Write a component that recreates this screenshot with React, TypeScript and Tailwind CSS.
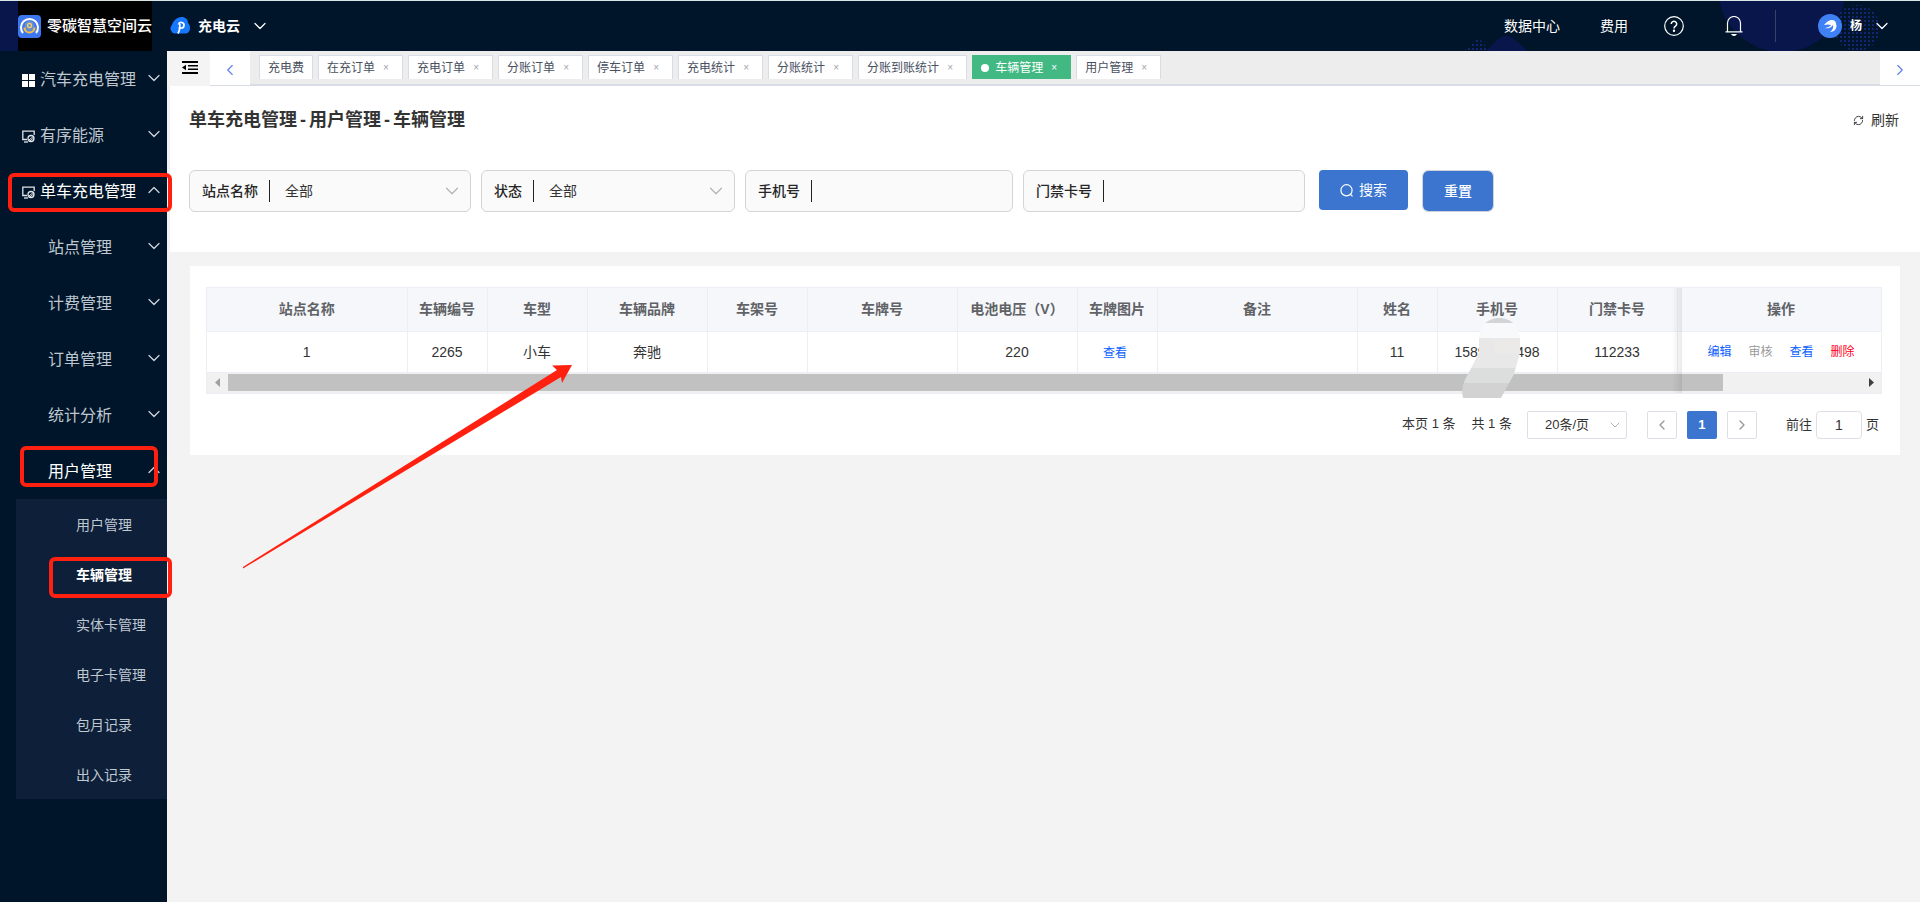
import { ChevronDown, ChevronLeft, ChevronRight, ChevronUp, RefreshCw } from 'lucide-react';
import clsx from 'clsx';

const tabs = [
  { title: '充电费', fixed: true },
  { title: '在充订单' },
  { title: '充电订单' },
  { title: '分账订单' },
  { title: '停车订单' },
  { title: '充电统计' },
  { title: '分账统计' },
  { title: '分账到账统计' },
  { title: '车辆管理', active: true },
  { title: '用户管理' },
];

const stationMenus = ['站点管理', '计费管理', '订单管理', '统计分析'];

const userMenus = ['用户管理', '车辆管理', '实体卡管理', '电子卡管理', '包月记录', '出入记录'];

const columns = [
  { title: '站点名称', width: 'w-[200px]' },
  { title: '车辆编号', width: 'w-[80px]' },
  { title: '车型', width: 'w-[100px]' },
  { title: '车辆品牌', width: 'w-[120px]' },
  { title: '车架号', width: 'w-[100px]' },
  { title: '车牌号', width: 'w-[150px]' },
  { title: '电池电压（V）', width: 'w-[120px]' },
  { title: '车牌图片', width: 'w-[80px]' },
  { title: '备注', width: 'w-[200px]' },
  { title: '姓名', width: 'w-[80px]' },
  { title: '手机号', width: 'w-[120px]' },
  { title: '门禁卡号', width: 'w-[120px]' },
];

const GridIcon = () => (
  <svg className="w-[13px] h-[13px]" viewBox="0 0 13 13" fill="#fff">
    <path d="M0 0h6v6H0zM7 0h6v6H7zM0 7h6v6H0zM7 7h6v6H7z" />
  </svg>
);

const MonitorIcon = () => (
  <svg className="w-[13px] h-[13px]" viewBox="0 0 13 13" fill="none" stroke="#dfe4ea" strokeWidth="1.3">
    <path d="M5 9.5H.8V1.2h11.4V5" />
    <path d="M2 12h4" />
    <circle cx="9" cy="8.5" r="3" />
    <path d="M6.3 10.5l5-4M7 11.6l5-3.8" strokeWidth="1" />
  </svg>
);

// red frame drawn over a highlighted menu entry
const Frame = ({ className }: { className: string }) => (
  <span className={clsx('absolute z-10 rounded-md border-4 border-[#ff2010] pointer-events-none', className)} />
);

const HeaderPattern = () => (
  <svg className="absolute right-0 top-0 pointer-events-none" width="480" height="50" viewBox="0 1 480 50">
    <defs>
      <pattern id="dots" width="4" height="4" patternUnits="userSpaceOnUse">
        <rect width="2" height="2" fill="#142474" />
      </pattern>
    </defs>
    <circle cx="342" cy="-12" r="64" fill="#08164c" />
    <circle cx="417" cy="28" r="23" fill="url(#dots)" />
    <path d="M46 51l12-12q8-7 16 0l14 12z" fill="#08164c" />
    <path d="M24 51l14-14 12 14z" fill="url(#dots)" />
  </svg>
);

const Header = () => (
  <header className="relative flex items-center h-[51px] border-t border-[#dbe5e5] bg-[#001529] text-white">
    <HeaderPattern />
    <div className="w-[18px] self-stretch bg-[#08164c]" />
    <div className="flex items-center w-[134px] self-stretch bg-black">
      <svg className="w-[23px] h-[23px] shrink-0" viewBox="0 0 23 23">
        <rect width="23" height="23" rx="4" fill="#3d77f0" />
        <path d="M5 18A8.5 8.5 0 1 1 18 18" fill="none" stroke="#fff" strokeWidth="2" />
        <circle cx="11.5" cy="11" r="5" fill="#6b8ed0" />
        <path d="M6.5 12.5a5 5 0 0 0 10 0" fill="none" stroke="#eebf4c" strokeWidth="2.2" />
        <circle cx="11.5" cy="10.5" r="2" fill="none" stroke="#f4cf6a" strokeWidth="1.3" />
      </svg>
      <span className="ml-[6px] text-[15px] leading-5 font-medium whitespace-nowrap">零碳智慧空间云</span>
    </div>
    <button className="flex items-center ml-[18px]">
      <svg className="w-5 h-[18px]" viewBox="0 0 20 18">
        <path d="M5 16.5a5 5 0 0 1-3-8.500C3 4 7 0 11.500 0c4 0 6.500 2.500 6.500 6 1.500 1 2 3 2 5 0 3.500-2 5.500-5 5.500z" fill="#1677ff" />
        <path
          d="M8.500 7.500a2.800 2.800 0 1 1 2.500 3.500H8.500M9.800 7v4.500q-.800 3-1.800 5"
          fill="none"
          stroke="#fff"
          strokeWidth="1.700"
        />
      </svg>
      <span className="ml-2 text-sm font-bold">充电云</span>
      <ChevronDown className="ml-[10px] w-5 h-5" strokeWidth={1.5} />
    </button>
    <nav className="relative flex items-center ml-auto text-sm">
      <a href="#data" className="mr-10">数据中心</a>
      <a href="#cost" className="mr-9">费用</a>
      <button aria-label="帮助" className="mr-10">
        <svg className="w-5 h-5" viewBox="0 0 20 20" fill="none" stroke="#fff" strokeWidth="1.2">
          <circle cx="10" cy="10" r="9.3" />
          <path d="M7.3 8a2.7 2.7 0 1 1 4.2 2.200Q10 11.200 10 12.500" strokeWidth="1.5" />
          <circle cx="10" cy="14.7" r=".6" fill="#fff" />
        </svg>
      </button>
      <button aria-label="消息" className="mr-[31px]">
        <svg className="w-5 h-5" viewBox="0 0 20 20" fill="none" stroke="#fff" strokeWidth="1.2">
          <path d="M1.5 15.800h17M3.500 15.500V7a6.500 6.500 0 0 1 13 0v8.500" />
          <path d="M7 18h6q-1 2-3 2t-3-2z" fill="#fff" stroke="none" />
        </svg>
      </button>
      <span className="w-px h-8 bg-[#3a4262]" />
      <button className="flex items-center ml-[42px] mr-7">
        <svg className="w-6 h-6" viewBox="0 0 24 24">
          <circle cx="12" cy="12" r="12" fill="#3f80f5" />
          <path d="M6 11Q12 4 17 7q3 5 0 9-2 2-5 2 4-3 3-7-3 4-8 3 5-1 6-3-3-1-7 0z" fill="#fff" />
        </svg>
        <span className="ml-2 text-xs font-bold">杨</span>
        <ChevronDown className="ml-[10px] w-5 h-5" strokeWidth={1.5} />
      </button>
    </nav>
  </header>
);

const Sidebar = () => {
  const item = 'relative flex items-center w-full h-14 pt-[2px] pr-[3px] text-base text-left whitespace-nowrap';
  const arrow = 'ml-auto mb-1 w-5 h-5 text-[#cfd5dc]';
  return (
    <aside className="w-[167px] shrink-0 bg-[#001529] text-[#bfc7d0]">
      <button className={clsx(item, 'pl-[22px]')}>
        <GridIcon />
        <span className="ml-[5px]">汽车充电管理</span>
        <ChevronDown className={arrow} strokeWidth={1.5} />
      </button>
      <button className={clsx(item, 'pl-[22px]')}>
        <MonitorIcon />
        <span className="ml-[5px]">有序能源</span>
        <ChevronDown className={arrow} strokeWidth={1.5} />
      </button>
      <button className={clsx(item, 'pl-[22px] text-white')}>
        <MonitorIcon />
        <span className="ml-[5px]">单车充电管理</span>
        <ChevronUp className={arrow} strokeWidth={1.5} />
        <Frame className="left-2 -right-[5px] top-[10px] h-[39px]" />
      </button>
      {stationMenus.map((menu) => (
        <button key={menu} className={clsx(item, 'pl-12')}>
          {menu}
          <ChevronDown className={arrow} strokeWidth={1.5} />
        </button>
      ))}
      <button className={clsx(item, 'pl-12 text-white')}>
        用户管理
        <ChevronUp className={arrow} strokeWidth={1.5} />
        <Frame className="left-5 right-[9px] top-[3px] h-[41px]" />
      </button>
      <ul className="ml-4 bg-[#0e1f39] text-sm">
        {userMenus.map((menu) => (
          <li key={menu} className="relative">
            <a
              href="#menu"
              className={clsx('flex items-center h-[50px] pt-[2px] pl-[60px]', menu === '车辆管理' && 'text-white font-bold')}
            >
              {menu}
            </a>
            {menu === '车辆管理' && <Frame className="left-[33px] -right-[5px] top-2 h-[41px]" />}
          </li>
        ))}
      </ul>
    </aside>
  );
};

const TabBar = () => (
  <div className="flex h-[35px] border-b-2 border-[#d8dce5] bg-[#ededed]">
    <button aria-label="收起菜单" className="flex items-center w-[43px] -mb-[2px] pl-[15px] pb-[2px] bg-[#f4f4f4]">
      <svg className="w-4 h-[13px]" viewBox="0 0 16 13" fill="#000">
        <path d="M0 0h16v2H0zM6 4h10v1.600H6zM6 7.400h10V9H6zM0 11h16v2H0zM4 3.700v5.600L0 6.500z" />
      </svg>
    </button>
    <button aria-label="向左" className="flex items-center justify-center w-10 -mb-px pt-1 bg-white text-[#5b7ef5]">
      <ChevronLeft className="w-[18px] h-[18px]" strokeWidth={1.5} />
    </button>
    <div className="flex flex-1 min-w-0 gap-[5px] pt-1 pl-[9px] overflow-hidden">
      {tabs.map((tab) => (
        <div
          key={tab.title}
          className={clsx(
            'flex items-center shrink-0 h-6 px-2 pt-px border border-b-0 text-xs',
            tab.active ? 'border-[#42b983] bg-[#42b983] text-white' : 'border-[#d8dce5] bg-white text-[#495060]'
          )}
        >
          {tab.active && <span className="w-2 h-2 mr-[6px] rounded-full bg-white" />}
          <a href="#tab">{tab.title}</a>
          {!tab.fixed && (
            <button
              aria-label="关闭"
              className={clsx('w-4 ml-[3px] text-[10px] leading-4', tab.active ? 'text-white' : 'text-[#a0a4ab]')}
            >
              ×
            </button>
          )}
        </div>
      ))}
    </div>
    <button aria-label="向右" className="flex items-center justify-center w-10 -mb-px pt-1 bg-white text-[#5b7ef5]">
      <ChevronRight className="w-[18px] h-[18px]" strokeWidth={1.5} />
    </button>
  </div>
);

type FieldProps = { id: string; label: string; width: string; select?: boolean };

const Field = ({ id, label, width, select }: FieldProps) => (
  <div className={clsx('relative flex items-center h-[42px] px-3 border border-[#d4d4d4] rounded-md bg-[#fafafa] text-sm', width)}>
    <label htmlFor={id} className="font-medium text-[#262626] whitespace-nowrap">
      {label}
    </label>
    <span className="w-px h-[22px] ml-[11px] shrink-0 bg-[#222]" />
    {select ? (
      <>
        <select id={id} className="flex-1 min-w-0 pl-[15px] appearance-none bg-transparent text-[#333] outline-none">
          <option>全部</option>
        </select>
        <ChevronDown className="absolute right-[7px] w-[22px] h-[22px] text-[#b0b3b9] pointer-events-none" strokeWidth={1.3} />
      </>
    ) : (
      <input id={id} type="text" className="flex-1 min-w-0 pl-[15px] bg-transparent outline-none" />
    )}
  </div>
);

// smudge over the middle digits of the phone number
const Mosaic = () => (
  <svg className="absolute left-[23px] -top-[14px] z-10 pointer-events-none" width="60" height="81" viewBox="1461 317 60 81">
    <clipPath id="smudge">
      <path d="M1479 340C1479 326 1487 317 1499 317C1512 317 1520 326 1520 340V352L1514 373L1501 397H1463C1461 388 1463 382 1467 375L1479 352Z" />
    </clipPath>
    <g clipPath="url(#smudge)">
      <rect x="1461" y="317" width="60" height="5" fill="#d3d4d5" />
      <rect x="1461" y="322" width="60" height="15" fill="#f8f9fb" />
      <rect x="1461" y="337" width="60" height="30" fill="#e8e8e8" />
      <rect x="1495" y="337" width="26" height="15" fill="#ebeae9" />
      <rect x="1461" y="367" width="60" height="15" fill="#dcdedd" />
      <rect x="1461" y="382" width="60" height="15" fill="#d2d2d2" />
    </g>
  </svg>
);

const VehicleTable = () => (
  <div className="relative border border-[#ebeef5] text-sm">
    <table className="w-full table-fixed border-collapse text-center text-[#333]">
      <thead>
        <tr className="h-[43px] border-b border-[#ebeef5] bg-[#f5f7fb] text-[#606266]">
          {columns.map((col) => (
            <th key={col.title} className={clsx('p-0 border-r border-[#ebeef5] font-bold whitespace-nowrap', col.width)}>
              {col.title}
            </th>
          ))}
          <th className="p-0" />
          <th className="w-[200px] p-0 font-bold">操作</th>
        </tr>
      </thead>
      <tbody>
        <tr className="h-[41px] border-b border-[#ebeef5] *:border-r *:border-[#ebeef5]">
          <td>1</td>
          <td>2265</td>
          <td>小车</td>
          <td>奔驰</td>
          <td />
          <td />
          <td>220</td>
          <td>
            <a href="#photo" className="pr-1 text-xs text-[#0a60ff]">查看</a>
          </td>
          <td />
          <td>11</td>
          <td className="relative">
            <span className="flex justify-between w-[85px] mx-auto">
              <span>1589</span>
              <span>498</span>
            </span>
            <Mosaic />
          </td>
          <td>112233</td>
          <td className="border-r-0!" />
          <td className="border-r-0!">
            <div className="flex justify-center gap-[17px] text-xs">
              <a href="#edit" className="text-[#0a60ff]">编辑</a>
              <a href="#audit" className="text-[#999]">审核</a>
              <a href="#view" className="text-[#0a60ff]">查看</a>
              <a href="#delete" className="text-[#ff0018]">删除</a>
            </div>
          </td>
        </tr>
      </tbody>
    </table>
    <div className="flex items-center h-5 pl-2 pr-[7px] bg-[#f1f1f1]">
      <svg className="w-[5px] h-[9px]" viewBox="0 0 5 9" fill="#a0a0a0">
        <path d="M5 0v9L0 4.5z" />
      </svg>
      <div className="flex-1 ml-2 mr-[146px] h-[17px] bg-[#c1c1c1]" />
      <svg className="w-[5px] h-[9px]" viewBox="0 0 5 9" fill="#404040">
        <path d="M0 0v9l5-4.5z" />
      </svg>
    </div>
    {/* shadow of the fixed column */}
    <div className="absolute inset-y-0 right-[199px] w-[10px] bg-linear-to-r from-transparent to-black/8 pointer-events-none" />
  </div>
);

const Pagination = () => {
  const pager = 'flex items-center justify-center w-[30px] h-7 border border-[#dcdfe6] rounded-xs text-[#999]';
  return (
    <div className="flex items-center mt-[17px] pr-[3px] justify-end text-[13px] text-[#333]">
      <span className="pb-[2px]">本页 1 条</span>
      <span className="ml-4 pb-[2px]">共 1 条</span>
      <div className="relative flex items-center ml-[15px]">
        <select aria-label="每页条数" className="w-[100px] h-7 pl-[17px] appearance-none border border-[#dcdfe6] rounded-xs bg-white">
          <option>20条/页</option>
        </select>
        <ChevronDown className="absolute right-1 w-4 h-4 text-[#b0b3b9] pointer-events-none" strokeWidth={1.5} />
      </div>
      <button aria-label="上一页" className={clsx(pager, 'ml-5')}>
        <ChevronLeft className="w-4 h-4" strokeWidth={2} />
      </button>
      <button className="w-[30px] h-7 ml-[10px] rounded-xs bg-[#3b75cf] text-white font-bold">1</button>
      <button aria-label="下一页" className={clsx(pager, 'ml-[10px]')}>
        <ChevronRight className="w-4 h-4" strokeWidth={2} />
      </button>
      <label htmlFor="page" className="ml-[29px]">前往</label>
      <input
        id="page"
        defaultValue="1"
        className="w-[46px] h-7 mx-1 border border-[#dcdfe6] rounded-sm text-center text-sm outline-none"
      />
      <span>页</span>
    </div>
  );
};

const App = () => {
  return (
    <div className="flex flex-col min-h-screen bg-[#f3f3f3] font-['Liberation_Sans','Noto_Sans_CJK_SC',sans-serif]">
      <Header />
      <div className="flex flex-1">
        <Sidebar />
        <main className="relative flex-1 min-w-0">
          <TabBar />
          <div className="border-l-3 border-[#f0f2f5]">
            <section className="h-[166px] pl-[19px] pr-[21px] pt-5 bg-white">
              <div className="flex items-center justify-between h-7">
                <h1 className="flex gap-[3px] text-lg font-bold text-[#333]">
                  <span>单车充电管理</span>
                  <span>-</span>
                  <span>用户管理</span>
                  <span>-</span>
                  <span>车辆管理</span>
                </h1>
                <button className="flex items-center gap-[7px] text-sm text-[#333]">
                  <RefreshCw className="w-[11px] h-[11px]" strokeWidth={2} />
                  刷新
                </button>
              </div>
              <form className="flex mt-9 gap-[10px]">
                <Field id="station" label="站点名称" width="w-[282px]" select />
                <Field id="status" label="状态" width="w-[254px]" select />
                <Field id="phone" label="手机号" width="w-[268px]" />
                <Field id="card" label="门禁卡号" width="w-[282px]" />
                <button
                  type="button"
                  className="flex items-center justify-center gap-[6px] w-[89px] h-10 ml-1 rounded-sm bg-[#3b75cf] text-sm text-white"
                >
                  <svg className="w-[13px] h-[13px]" viewBox="0 0 13 13" fill="none" stroke="#fff" strokeWidth="1.2">
                    <circle cx="6.5" cy="6.3" r="5.6" />
                    <path d="M10.2 10l2.300 2.400" />
                  </svg>
                  搜索
                </button>
                <button
                  type="reset"
                  className="w-[72px] h-[42px] ml-1 border border-[#cfd3da] rounded-md bg-[#3b75cf] bg-clip-padding text-sm font-medium text-white"
                >
                  重置
                </button>
              </form>
            </section>
            <section className="mt-[14px] mx-5 pl-4 pr-[18px] pt-[21px] pb-4 bg-white">
              <VehicleTable />
              <Pagination />
            </section>
          </div>
          <svg
            className="absolute left-[75px] top-[313px] z-10 pointer-events-none"
            width="331"
            height="206"
            viewBox="242 364 331 206"
            fill="#ff2010"
          >
            <path d="M243 567L557 370L552 365.5L572 365L562 383L561 377L243 568.5Z" />
          </svg>
        </main>
      </div>
    </div>
  );
};

export default App;
